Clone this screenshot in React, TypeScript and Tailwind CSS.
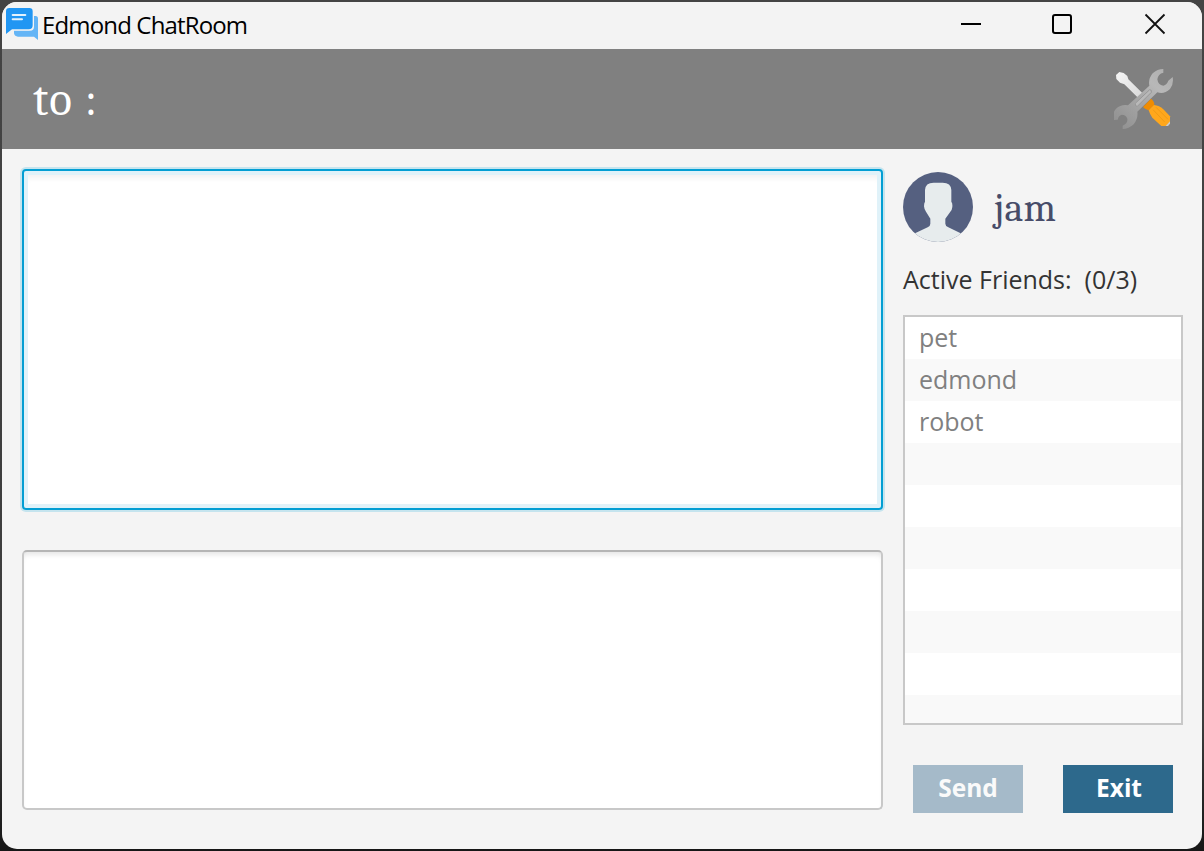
import React from "react";

const friends = ["pet", "edmond", "robot", "", "", "", "", "", "", ""];

function ChatLogo() {
  return (
    <svg className="h-8 w-8 shrink-0" viewBox="0 0 96 96">
      <path d="M36 68H72Q84 68 84 56V24H89Q96 24 96 32V96L84 86H36Q26 86 24 76V68Z" fill="#64b5f6" />
      <path d="M10 0H70Q80 0 80 10V52Q80 64 68 64H18L0 78V10Q0 0 10 0Z" fill="#2196f3" stroke="#f3f3f3" strokeWidth="5" paintOrder="stroke" />
      <path d="M20 21H58M20 34H48" stroke="#e3f2fd" strokeWidth="6" strokeLinecap="round" />
    </svg>
  );
}

function ToolsIcon() {
  return (
    <svg className="h-[60px] w-[60px]" viewBox="42 42 180 180">
      <defs>
        <linearGradient id="steel" x1="200" y1="50" x2="50" y2="210" gradientUnits="userSpaceOnUse">
          <stop offset="0" stopColor="#b0b0b0" />
          <stop offset="0.25" stopColor="#b8b8b8" />
          <stop offset="0.55" stopColor="#a6a6a6" />
          <stop offset="1" stopColor="#919191" />
        </linearGradient>
        <linearGradient id="blade" x1="60" y1="60" x2="125" y2="120" gradientUnits="userSpaceOnUse">
          <stop offset="0" stopColor="#f2f2f2" />
          <stop offset="1" stopColor="#dadada" />
        </linearGradient>
      </defs>
      <path d="M48 60L58 51L71 54L82 63L85 73L130 117L117 131L73 88L60 83L49 72Z" fill="url(#blade)" />
      <path
        d="M190 42L190 53Q174 56 172 73Q174 90 190 92Q201 89 205 77L218 66Q222 87 210 102Q192 119 172 112L112 170Q115 190 101 208Q86 222 68 222L68 212Q84 205 82 191Q78 179 65 179Q55 182 53 194L40 195Q35 176 48 161Q64 147 84 151L148 92Q144 72 158 55Q172 42 190 42Z"
        fill="url(#steel)"
      />
      <path d="M106 145L149 104Q156 104 154 112L112 154Q104 154 106 145Z" fill="#b9b9b9" stroke="#989898" strokeWidth="3" />
      <path d="M129 156L153 131Q166 142 162 152L146 166Q137 164 129 156Z" fill="#f08c00" />
      <path d="M146 166L162 150Q178 151 190 163L210 184V201L199 213H184L157 188Q150 179 146 166Z" fill="#ffa71c" />
      <path d="M160 165L193 200M169 158L203 192" stroke="#f09b14" strokeWidth="3" strokeLinecap="round" />
      <path d="M210 199L197 213H204L210 206Z" fill="#c9c9c9" />
    </svg>
  );
}

function Avatar() {
  return (
    <svg className="h-[70px] w-[70px] shrink-0" viewBox="0 0 210 210">
      <clipPath id="portrait"><circle cx="105" cy="105" r="105" /></clipPath>
      <g clipPath="url(#portrait)">
        <rect width="210" height="210" fill="#556080" />
        <path d="M66 54Q67 32 92 32H119Q144 32 145 54V89Q149 93 148 105Q147 115 142 119L127 140V155Q127 162 136 166L173 184L180 215H30L36 184L74 166Q82 162 82 155V140L69 119Q64 114 63 103Q63 93 66 89Z" fill="#e7eced" />
      </g>
    </svg>
  );
}

export default function App() {
  return (
    <div className="h-[851px] w-[1204px] overflow-hidden bg-[linear-gradient(#444,#3c3c3c_85%,#161616)] p-[2px] font-['Open_Sans',sans-serif]">
      <div className="flex h-[847px] w-[1200px] flex-col overflow-hidden rounded-[15px] bg-[#f4f4f4]">
        <header className="flex h-[47px] shrink-0 items-center justify-between bg-[#f3f3f3] pb-[3px] pl-1">
          <div className="flex items-center">
            <ChatLogo />
            <h1 className="ml-[4px] whitespace-nowrap pt-[2px] text-[24px] leading-[32px] tracking-[-0.85px] text-black">Edmond ChatRoom</h1>
          </div>
          <div className="mr-[36px] flex items-center">
            <svg className="mr-[69px] h-[22px] w-[22px]" viewBox="0 0 22 22"><path d="M1 11H21" stroke="#000" strokeWidth="2" /></svg>
            <svg className="mr-[71px] h-[22px] w-[22px]" viewBox="0 0 22 22"><rect x="2" y="2" width="18" height="18" rx="2" fill="none" stroke="#000" strokeWidth="2" /></svg>
            <svg className="h-[22px] w-[22px]" viewBox="0 0 22 22"><path d="M1.5 1.5L20.5 20.5M20.5 1.5L1.5 20.5" stroke="#111" strokeWidth="1.8" /></svg>
          </div>
        </header>
        <div className="flex h-[100px] shrink-0 items-center justify-between bg-[#808080] pr-[28px] pl-[31px]">
          <span className="font-[Cambria,Caladea,'Liberation_Serif',serif] pt-[2px] text-[47px] tracking-[1.3px] text-white">to :</span>
          <ToolsIcon />
        </div>
        <main className="flex flex-1 gap-5 pr-[19px] pl-5 pt-5">
          <div className="flex w-[861px] shrink-0 flex-col gap-10">
            <div className="h-[341px] rounded-[4px] border-2 border-[#039ed3] bg-white shadow-[0_0_0_2px_#c5e4ee,inset_0_0_0_4px_#e0f2f9,inset_0_8px_5px_#f4f4f4]" />
            <div className="h-[260px] rounded-[5px] border-2 border-[#c8c8c8] border-t-[#b5b5b5] bg-white shadow-[inset_0_5px_5px_-2px_#e8e8e8]" />
          </div>
          <aside className="flex w-[280px] shrink-0 flex-col">
            <div className="mt-[3px] flex h-[70px] items-center">
              <Avatar />
              <span className="ml-[21px] font-[Cambria,Caladea,'Liberation_Serif',serif] pt-[2px] text-[40px] leading-[70px] tracking-[0.3px] text-[#474c69]">jam</span>
            </div>
            <p className="mt-[20px] h-[36px] whitespace-pre text-[25px] leading-[34px] text-[#333]">Active Friends:  (0/3)</p>
            <ul className="mt-[17px] h-[410px] overflow-hidden border-2 border-[#c8c8c8]">
              {friends.map((name, i) => (
                <li key={i} className="h-[42px] bg-white pl-[14px] text-[25px] leading-[40px] text-[#808080] even:bg-[#f9f9f9]">{name}</li>
              ))}
            </ul>
            <div className="mt-10 flex gap-10 px-[10px]">
              <button className="h-12 w-[110px] bg-[#a5bac9] pb-[2px] text-[24.5px] leading-[46px] font-bold text-[#fafafa]">Send</button>
              <button className="h-12 w-[110px] bg-[#2d698c] pb-[2px] pl-[2px] text-[24.5px] leading-[46px] font-bold text-white">Exit</button>
            </div>
          </aside>
        </main>
      </div>
    </div>
  );
}
